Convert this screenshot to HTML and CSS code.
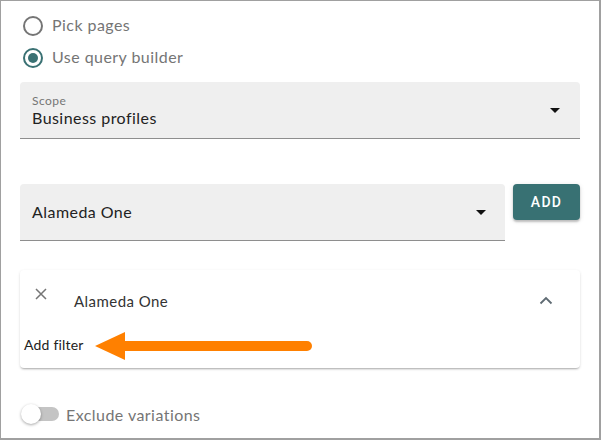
FILE: index.html
```html
<!DOCTYPE html>
<html>
<head>
<meta charset="utf-8">
<link rel="stylesheet" href="styles.css">
</head>
<body>
<div class="frame">
  <div class="radio-row">
    <span class="radio"></span>
    <span class="radio-label">Pick pages</span>
  </div>
  <div class="radio-row">
    <span class="radio checked"></span>
    <span class="radio-label">Use query builder</span>
  </div>

  <div class="field scope">
    <div class="field-text">
      <div class="field-label">Scope</div>
      <div class="field-value">Business profiles</div>
    </div>
    <span class="caret"></span>
  </div>

  <div class="add-row">
    <div class="field select">
      <div class="field-value">Alameda One</div>
      <span class="caret"></span>
    </div>
    <button class="btn">ADD</button>
  </div>

  <div class="card">
    <div class="card-head">
      <svg class="close" width="12" height="12" viewBox="0 0 12 12"><path d="M1 1 L11 11 M11 1 L1 11" stroke="#757575" stroke-width="1.5" fill="none"/></svg>
      <span class="card-title">Alameda One</span>
      <svg class="chev" width="14" height="9" viewBox="0 0 14 9"><path d="M1.5 7.5 L7 2 L12.5 7.5" stroke="#5f6b73" stroke-width="1.8" fill="none"/></svg>
    </div>
    <div class="add-filter">Add filter</div>
  </div>

  <div class="toggle-row">
    <span class="toggle"><span class="thumb"></span></span>
    <span class="toggle-label">Exclude variations</span>
  </div>

  <svg class="annot" width="230" height="32" viewBox="0 0 230 32"><path d="M0 16 L30 2 L30 30 Z" fill="#ff8000"/><line x1="28" y1="16" x2="212" y2="16" stroke="#ff8000" stroke-width="10" stroke-linecap="round"/></svg>
</div>
</body>
</html>
```

FILE: styles.css
```css
* { box-sizing: border-box; }
body {
  margin: 0;
  background: #fff;
  font-family: Lato, "Open Sans", sans-serif;
  letter-spacing: 0.45px;
}
.frame {
  position: relative;
  width: 601px;
  height: 440px;
  border: 1px solid #a0a0a0;
  border-right-width: 2px;
  border-bottom-width: 2px;
  padding: 7px 19px 0 19px;
}
.radio-row {
  display: flex;
  align-items: center;
  height: 32px;
}
.radio {
  width: 20px;
  height: 20px;
  margin-left: 3px;
  margin-top: 3px;
  border: 2px solid #757575;
  border-radius: 50%;
  display: flex;
  align-items: center;
  justify-content: center;
}
.radio.checked {
  border-color: #3a7173;
}
.radio.checked::after {
  content: "";
  width: 10px;
  height: 10px;
  border-radius: 50%;
  background: #3a7173;
}
.radio-label {
  margin-left: 9px;
  font-size: 16px;
  color: #757575;
}
.field {
  background: #efefef;
  border-bottom: 1px solid #8e8e8e;
  border-radius: 4px 4px 0 0;
  height: 57px;
  display: flex;
  align-items: center;
  padding: 0 20px 0 12px;
}
.scope {
  margin-top: 10px;
}
.field-text {
  flex: 1;
  padding-top: 2px;
}
.field-label {
  font-size: 12px;
  color: #757575;
  line-height: 14px;
}
.field-value {
  flex: 1;
  font-size: 16px;
  color: #222;
  line-height: 20px;
}
.caret {
  width: 0;
  height: 0;
  border-left: 5px solid transparent;
  border-right: 5px solid transparent;
  border-top: 5px solid #111;
  margin-top: 1px;
}
.add-row {
  display: flex;
  align-items: flex-start;
  gap: 8px;
  margin-top: 45px;
}
.select {
  width: 485px;
  padding-right: 19px;
}
.btn {
  width: 67px;
  height: 36px;
  border: none;
  border-radius: 4px;
  background: #387173;
  color: #fff;
  font-family: Roboto, sans-serif;
  font-weight: 500;
  font-size: 14px;
  letter-spacing: 1.25px;
  box-shadow: 0 2px 2px rgba(0,0,0,0.2), 0 1px 5px rgba(0,0,0,0.12);
  padding: 0;
}
.card {
  margin-top: 29px;
  height: 98px;
  background: #fff;
  border-radius: 4px;
  box-shadow: 0 2px 2px -1px rgba(0,0,0,0.25), 0 1px 3px rgba(0,0,0,0.12);
  padding: 0 0 0 4px;
}
.card-head {
  display: flex;
  align-items: center;
  height: 62px;
  padding: 0 27px 0 11px;
}
.close {
  margin-top: -14px;
}
.card-title {
  margin-left: 27px;
  font-size: 15px;
  color: #333;
  flex: 1;
}
.chev {
  margin-top: -1px;
}
.add-filter {
  font-size: 14px;
  letter-spacing: 0.2px;
  color: #222;
  line-height: 18px;
  margin-top: 4px;
}
.toggle-row {
  display: flex;
  align-items: center;
  margin-top: 36px;
  height: 20px;
}
.toggle {
  position: relative;
  width: 36px;
  height: 14px;
  border-radius: 7px;
  background: #c4c4c4;
  margin-left: 3px;
}
.thumb {
  position: absolute;
  left: -2px;
  top: -3px;
  width: 20px;
  height: 20px;
  border-radius: 50%;
  background: #fff;
  box-shadow: 0 1px 3px rgba(0,0,0,0.35);
}
.toggle-label {
  margin-left: 7px;
  font-size: 16px;
  color: #757575;
}
.annot {
  position: absolute;
  left: 94px;
  top: 329px;
}
```
